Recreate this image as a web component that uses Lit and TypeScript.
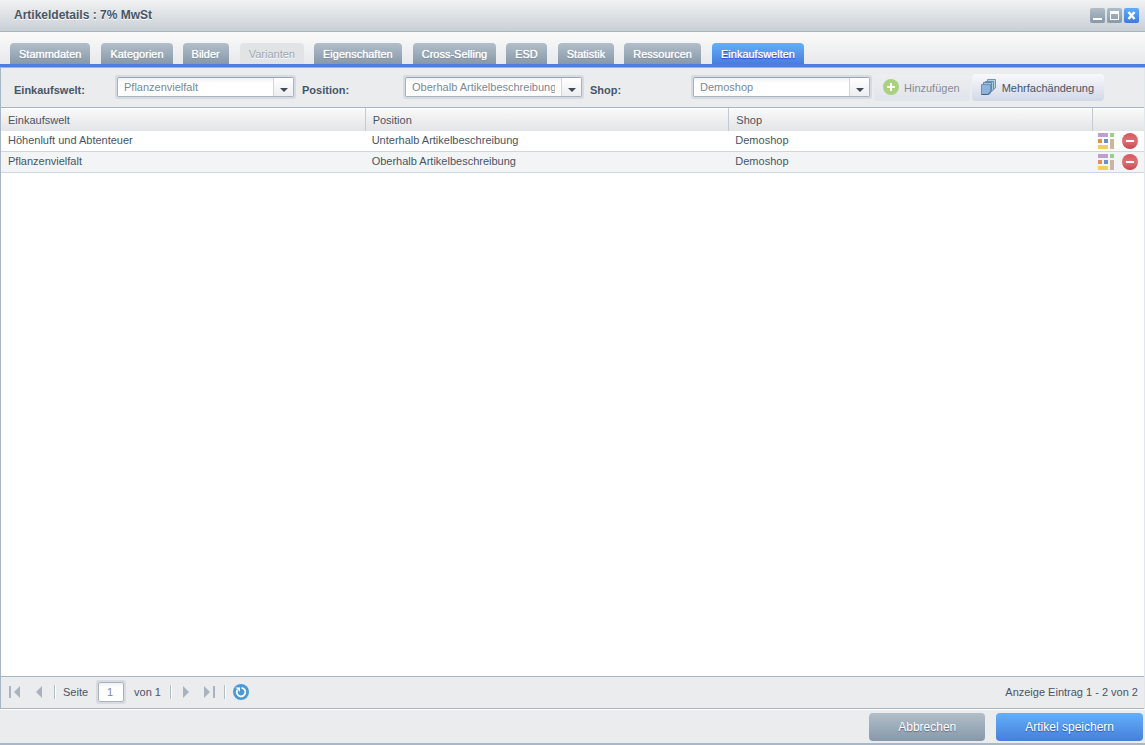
import { LitElement, html, css, svg } from "lit";
import { customElement, state } from "lit/decorators.js";
import { classMap } from "lit/directives/class-map.js";

interface Tab {
  label: string;
  disabled?: boolean;
}

interface Assignment {
  world: string;
  position: string;
  shop: string;
}

const TABS: Tab[] = [
  { label: "Stammdaten" },
  { label: "Kategorien" },
  { label: "Bilder" },
  { label: "Varianten", disabled: true },
  { label: "Eigenschaften" },
  { label: "Cross-Selling" },
  { label: "ESD" },
  { label: "Statistik" },
  { label: "Ressourcen" },
  { label: "Einkaufswelten" },
];

const ROWS: Assignment[] = [
  { world: "Höhenluft und Abtenteuer", position: "Unterhalb Artikelbeschreibung", shop: "Demoshop" },
  { world: "Pflanzenvielfalt", position: "Oberhalb Artikelbeschreibung", shop: "Demoshop" },
];

const FIELDS = [
  { id: "world", label: "Einkaufswelt:", options: ["Pflanzenvielfalt", "Höhenluft und Abtenteuer"] },
  { id: "position", label: "Position:", options: ["Oberhalb Artikelbeschreibung", "Unterhalb Artikelbeschreibung"] },
  { id: "shop", label: "Shop:", options: ["Demoshop"] },
];

const icon = (content: unknown, width = 16, height = 16) => html`
  <svg width=${width} height=${height} viewBox="0 0 ${width} ${height}" aria-hidden="true">${content}</svg>
`;

const minimizeIcon = svg`<path d="M3 10h9v2H3z" fill="#fff"/>`;
const maximizeIcon = svg`<path fill-rule="evenodd" d="M3 3h9v9H3zM4 6v5h7V6z" fill="#fff"/>`;
const closeIcon = svg`<path d="M4.500 4l6 7M10.500 4l-6 7" stroke="#fff" stroke-width="2.600" fill="none"/>`;

const plusIcon = svg`
  <circle cx="8" cy="8" r="8" fill="#a9d180"/>
  <path d="M7 4h2v3h3v2H9v3H7V9H4V7h3z" fill="#fff"/>`;

const stackIcon = svg`
  <g stroke-width="1">
    <path d="M6.500.5h8v8.500l-1.500 1h-6.500z" fill="#b4d4e5" stroke="#6d98b5"/>
    <path d="M4.500 2.500h8v8.500l-1.500 1h-6.500z" fill="#abcbe0" stroke="#658fb1"/>
    <path d="M2.500 3.500h8v9l-1.500 1h-6.500z" fill="#a3c6de" stroke="#5d87ac"/>
    <path d="M.5 5.500h9v8.500l-1.500 1.500h-7.500z" fill="#8fb4d8" stroke="#6a92bf"/>
    <path d="M.5 15.500h6l3-2.500" fill="none" stroke="#435c8c"/>
  </g>`;

const worldIcon = svg`
  <path d="M0 0h10v4H0z" fill="#bf9fcd"/>
  <path d="M12 0h4v4h-4z" fill="#96d18c"/>
  <path d="M0 6h4v4H0z" fill="#e0924a"/>
  <path d="M6 6h4v4H6z" fill="#6d8fca"/>
  <path d="M12 6h4v10h-4z" fill="#cbb5a0"/>
  <path d="M0 12h10v4H0z" fill="#f1cf59"/>`;

const minusIcon = svg`
  <defs><linearGradient id="m" x1="0" y1="0" x2="0" y2="1">
    <stop offset="0" stop-color="#d9545a"/><stop offset=".5" stop-color="#dc7376"/><stop offset="1" stop-color="#c9444b"/>
  </linearGradient></defs>
  <circle cx="8" cy="8" r="8" fill="url(#m)"/>
  <path d="M4 7h8v2H4z" fill="#fff"/>`;

const firstIcon = svg`<path d="M0 0h2v12H0z" fill="#a9b3bf"/><path d="M11 0v12L5 6z" fill="#a9b3bf"/>`;
const prevIcon = svg`<path d="M6 0v12L0 6z" fill="#a9b3bf"/>`;
const nextIcon = svg`<path d="M0 0v12l6-6z" fill="#a9b3bf"/>`;
const lastIcon = svg`<path d="M0 0v12l6-6z" fill="#a9b3bf"/><path d="M9 0h2v12H9z" fill="#a9b3bf"/>`;

const refreshIcon = svg`
  <circle cx="8" cy="8" r="8" fill="#4a9ad8"/>
  <path d="M8.500 3.800a4.300 4.300 0 1 1-4.200 2.200" fill="none" stroke="#fff" stroke-width="1.800"/>
  <path d="M2.500 3.500h4.500v4.500z" fill="#fff"/>`;

@customElement("app-root")
export class AppRoot extends LitElement {
  @state() private activeTab = "Einkaufswelten";

  static styles = css`
    :host {
      display: flex;
      flex-direction: column;
      box-sizing: border-box;
      min-height: 100vh;
      background: #ebecee;
      border-bottom: 2px solid #a9b7c8;
      color: #475566;
      font: 11px/14px "Liberation Sans", Arial, sans-serif;
    }
    *, *::before, *::after { box-sizing: border-box; }
    button, input, select { font: inherit; color: inherit; margin: 0; padding: 0; border: 0; background: none; }
    button { cursor: pointer; }
    button:disabled { cursor: default; }
    svg { display: block; flex: none; }

    .titlebar {
      display: flex;
      justify-content: space-between;
      height: 32px;
      padding: 8px 6px 0 14px;
      border-bottom: 1px solid #a8b3bf;
      background: linear-gradient(#f1f2f2, #c9d0d6);
    }
    .title { margin: 0; font-size: 12px; line-height: 14px; font-weight: bold; text-shadow: 0 1px 0 #fff; }
    .window-tools { display: flex; gap: 2px; }
    .tool { width: 15px; height: 15px; border-radius: 2px; background: linear-gradient(#b0bdc8, #8798a8); }
    .tool.close { background: linear-gradient(#5eaefa, #4079dc); }

    .tabs {
      display: flex;
      align-items: flex-end;
      height: 36px;
      padding: 0 10px;
      border-bottom: 1px solid #a4b4cb;
      box-shadow: inset 0 -3px #4a80da;
      background: linear-gradient(#fafafa, #e6e7e9);
    }
    .tab {
      height: 21px;
      margin: 0 10px 3px 0;
      padding: 1px 9px 0;
      border-radius: 4px 4px 0 0;
      background: linear-gradient(#b2bfca, #8798a9);
      color: #fff;
      line-height: 20px;
      text-shadow: 0 0 1px #fff, 0 1px 1px #72808f;
      white-space: nowrap;
    }
    .tab:nth-child(odd) { margin-right: 11px; }
    .tab.active { background: linear-gradient(#62b0fb, #477edb); text-shadow: 0 0 1px #fff, 0 1px 1px #1c18d8; }
    .tab:disabled { background: #e2e3e5; color: #9aa5b0; text-shadow: 0 1px 0 #fff; }

    .panel { display: flex; flex-direction: column; flex: 1; border-left: 1px solid #a8b5c5; border-right: 1px solid #e2e5e9; }

    .filters {
      display: flex;
      align-items: flex-start;
      height: 40px;
      padding: 6px 0 0 13px;
      border-bottom: 1px solid #a8b5c5;
    }
    .field { display: flex; margin-right: 6px; padding-top: 1px; }
    .field:last-of-type { margin-right: 2px; }
    .field-label { width: 101px; padding-top: 8px; font-weight: bold; }
    .combo { display: grid; width: 181px; height: 24px; border: 2px solid #d7dae0; border-radius: 3px; }
    .combo > * { grid-area: 1 / 1; }
    .select {
      appearance: none;
      width: 100%;
      height: 20px;
      padding: 0 26px 0 6px;
      border: 1px solid #a9b3be;
      border-top-color: #9aa6b3;
      border-radius: 2px;
      background: linear-gradient(#eff0f1, #fff 5px);
      color: #78899a;
      line-height: 18px;
    }
    .trigger {
      display: flex;
      align-items: center;
      justify-content: center;
      justify-self: end;
      width: 20px;
      height: 18px;
      margin: 1px 1px 0 0;
      padding-top: 5px;
      border-left: 1px solid #d2d6dc;
      background: linear-gradient(#fff, #edeef1);
      pointer-events: none;
    }
    .action {
      display: flex;
      align-items: center;
      gap: 5px;
      height: 27px;
      margin-right: 2px;
      padding: 0 10px 0 9px;
      border-radius: 4px;
      background: linear-gradient(#f9f9fb, #d1d8e7);
      white-space: nowrap;
    }
    .action svg { margin-bottom: 1px; }
    .action:disabled { background: linear-gradient(#edeef0, #e1e4ec); color: #888c93; }

    .content { flex: 1; background: #fff; }
    .grid { width: 100%; border-collapse: separate; border-spacing: 0; table-layout: fixed; }
    .tools-col { width: 52px; }
    .grid th {
      height: 23px;
      padding: 0 7px;
      border-left: 1px solid #c3cad2;
      background: linear-gradient(#fafafa, #e3e4e6);
      box-shadow: inset 0 1px #fff;
      font-weight: normal;
      text-align: left;
    }
    .grid th:first-child { padding-left: 6px; border-left-color: transparent; }
    .grid td { height: 21px; padding: 0 7px 2px; border-bottom: 1px solid #ced7de; }
    .grid td:last-child { padding: 0 6px; }
    .grid tr:nth-child(even) td { background: #f3f4f6; }
    .row-tools { display: flex; gap: 8px; }

    .pager {
      display: flex;
      align-items: center;
      height: 33px;
      padding: 0 6px 1px 8px;
      border-top: 1px solid #a8b5c5;
      border-bottom: 1px solid #a8b5c5;
    }
    .nav { display: flex; }
    .nav.prev { margin-left: 16px; }
    .nav.last { margin-left: 15px; }
    .separator { width: 2px; height: 14px; border-left: 1px solid #b4bcc6; border-right: 1px solid #fff; }
    .pager .separator { margin: 0 7px 0 12px; }
    .pager .separator.end { margin: 0 11px 0 9px; }
    .pager .separator.near { margin: 0 7px 0 9px; }
    .page-frame { height: 24px; margin: 0 8px; border: 2px solid #d7dae0; border-radius: 3px; }
    .page-input {
      display: block;
      width: 26px;
      height: 20px;
      padding: 0 8px;
      border: 1px solid #a9b3be;
      border-radius: 2px;
      background: linear-gradient(#eff0f1, #fff 5px);
      color: #78899a;
    }
    .summary { margin-left: auto; }

    .footer {
      display: flex;
      justify-content: flex-end;
      gap: 11px;
      padding: 3px 2px 2px;
      border-top: 1px solid #fff;
    }
    .command {
      height: 28px;
      padding: 0 29px;
      border-radius: 4px;
      background: linear-gradient(#b2bfca, #8798a9);
      color: #fff;
      font-size: 12px;
      text-shadow: 0 1px 1px #5d6b7b;
    }
    .command.primary { background: linear-gradient(#62b0fb, #477edb); text-shadow: 0 1px 1px #2c55b0; }
  `;

  private renderField(field: (typeof FIELDS)[number]) {
    return html`
      <div class="field">
        <label class="field-label" for=${field.id}>${field.label}</label>
        <div class="combo">
          <select class="select" id=${field.id}>
            ${field.options.map((option) => html`<option>${option}</option>`)}
          </select>
          <span class="trigger">${icon(svg`<path d="M0 0h8L4 4z" fill="#3f4b59"/>`, 8, 4)}</span>
        </div>
      </div>
    `;
  }

  render() {
    return html`
      <header class="titlebar">
        <h1 class="title">Artikeldetails : 7% MwSt</h1>
        <div class="window-tools">
          <button class="tool" aria-label="Minimieren">${icon(minimizeIcon, 15, 15)}</button>
          <button class="tool" aria-label="Maximieren">${icon(maximizeIcon, 15, 15)}</button>
          <button class="tool close" aria-label="Schließen">${icon(closeIcon, 15, 15)}</button>
        </div>
      </header>

      <nav class="tabs" role="tablist">
        ${TABS.map(
          (tab) => html`<button
            class=${classMap({ tab: true, active: tab.label === this.activeTab })}
            role="tab"
            aria-selected=${tab.label === this.activeTab}
            ?disabled=${tab.disabled}
            @click=${() => (this.activeTab = tab.label)}
          >${tab.label}</button>`
        )}
      </nav>

      <main class="panel">
        <div class="filters">
          ${FIELDS.map((field) => this.renderField(field))}
          <button class="action" disabled>${icon(plusIcon)}Hinzufügen</button>
          <button class="action">${icon(stackIcon)}Mehrfachänderung</button>
        </div>

        <div class="content">
          <table class="grid">
            <colgroup><col /><col /><col /><col class="tools-col" /></colgroup>
            <thead>
              <tr><th>Einkaufswelt</th><th>Position</th><th>Shop</th><th></th></tr>
            </thead>
            <tbody>
              ${ROWS.map(
                (row) => html`<tr>
                  <td>${row.world}</td>
                  <td>${row.position}</td>
                  <td>${row.shop}</td>
                  <td>
                    <div class="row-tools">
                      <button aria-label="Einkaufswelt öffnen">${icon(worldIcon)}</button>
                      <button aria-label="Löschen">${icon(minusIcon)}</button>
                    </div>
                  </td>
                </tr>`
              )}
            </tbody>
          </table>
        </div>

        <div class="pager">
          <button class="nav" aria-label="Erste Seite">${icon(firstIcon, 11, 12)}</button>
          <button class="nav prev" aria-label="Vorherige Seite">${icon(prevIcon, 6, 12)}</button>
          <span class="separator"></span>
          <label for="page">Seite</label>
          <span class="page-frame"><input class="page-input" id="page" value="1" /></span>
          <span>von 1</span>
          <span class="separator end"></span>
          <button class="nav" aria-label="Nächste Seite">${icon(nextIcon, 6, 12)}</button>
          <button class="nav last" aria-label="Letzte Seite">${icon(lastIcon, 11, 12)}</button>
          <span class="separator near"></span>
          <button class="nav" aria-label="Aktualisieren">${icon(refreshIcon)}</button>
          <span class="summary">Anzeige Eintrag 1 - 2 von 2</span>
        </div>
      </main>

      <footer class="footer">
        <button class="command">Abbrechen</button>
        <button class="command primary">Artikel speichern</button>
      </footer>
    `;
  }
}
